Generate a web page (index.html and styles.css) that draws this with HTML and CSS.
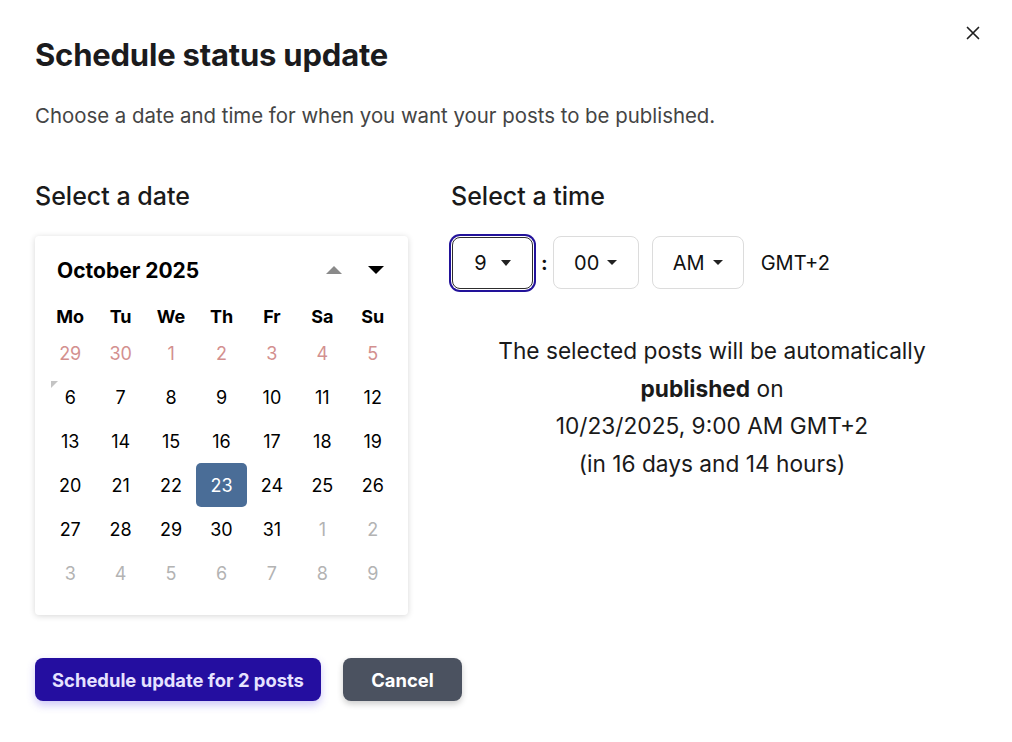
FILE: index.html
```html
<!DOCTYPE html>
<html lang="en">
<head>
<meta charset="utf-8">
<title>Schedule status update</title>
<link rel="stylesheet" href="styles.css">
</head>
<body>
<div class="dialog">
  <button class="close" aria-label="Close">
    <svg width="14" height="14" viewBox="0 0 14 14"><path d="M1.5 1.5 L12.5 12.5 M12.5 1.5 L1.5 12.5" stroke="#1f1f1f" stroke-width="1.7" stroke-linecap="round"/></svg>
  </button>
  <h1 class="title">Schedule status update</h1>
  <p class="subtitle">Choose a date and time for when you want your posts to be published.</p>

  <div class="columns">
    <section class="col-date">
      <h2 class="section-title">Select a date</h2>
      <div class="calendar">
        <div class="cal-header">
          <span class="month">October 2025</span>
          <div class="nav">
            <svg width="16" height="8" viewBox="0 0 16 8"><path d="M0 8 L8 0 L16 8 Z" fill="#8a8a8a"/></svg>
            <svg width="16" height="8" viewBox="0 0 16 8"><path d="M0 0 L16 0 L8 8 Z" fill="#000"/></svg>
          </div>
        </div>
        <div class="weekdays">
          <span>Mo</span><span>Tu</span><span>We</span><span>Th</span><span>Fr</span><span>Sa</span><span>Su</span>
        </div>
        <div class="days">
          <span class="prev">29</span><span class="prev">30</span><span class="prev">1</span><span class="prev">2</span><span class="prev">3</span><span class="prev">4</span><span class="prev">5</span>
          <span class="today">6</span><span>7</span><span>8</span><span>9</span><span>10</span><span>11</span><span>12</span>
          <span>13</span><span>14</span><span>15</span><span>16</span><span>17</span><span>18</span><span>19</span>
          <span>20</span><span>21</span><span>22</span><span class="selected">23</span><span>24</span><span>25</span><span>26</span>
          <span>27</span><span>28</span><span>29</span><span>30</span><span>31</span><span class="next">1</span><span class="next">2</span>
          <span class="next">3</span><span class="next">4</span><span class="next">5</span><span class="next">6</span><span class="next">7</span><span class="next">8</span><span class="next">9</span>
        </div>
      </div>
    </section>

    <section class="col-time">
      <h2 class="section-title">Select a time</h2>
      <div class="time-row">
        <div class="select select-hour focused">
          <span>9</span>
          <svg width="10" height="6" viewBox="0 0 10 6"><path d="M0 0 L10 0 L5 6 Z M4 0 L6 0 L5 1.4 Z" fill="#222"/></svg>
        </div>
        <span class="colon">:</span>
        <div class="select select-min">
          <span>00</span>
          <svg width="10" height="5" viewBox="0 0 10 5"><path d="M0 0 L10 0 L5 5 Z" fill="#222"/></svg>
        </div>
        <div class="select select-ampm">
          <span>AM</span>
          <svg width="10" height="5" viewBox="0 0 10 5"><path d="M0 0 L10 0 L5 5 Z" fill="#222"/></svg>
        </div>
        <span class="tz">GMT+2</span>
      </div>
      <p class="summary">The selected posts will be automatically<br><strong>published</strong> on<br>10/23/2025, 9:00 AM GMT+2<br>(in 16 days and 14 hours)</p>
    </section>
  </div>

  <div class="actions">
    <button class="btn btn-primary">Schedule update for 2 posts</button>
    <button class="btn btn-secondary">Cancel</button>
  </div>
</div>
</body>
</html>
```

FILE: styles.css
```css
* { box-sizing: border-box; }

body {
  margin: 0;
  background: #fff;
  font-family: Inter, "Noto Sans", "Liberation Sans", sans-serif;
  color: #1a1a1a;
}

.dialog {
  position: relative;
  width: 1012px;
  height: 742px;
  padding: 37px 35px 0 35px;
}

.close {
  position: absolute;
  top: 26px;
  right: 32px;
  width: 14px;
  height: 14px;
  padding: 0;
  border: 0;
  background: none;
  display: flex;
}

.title {
  margin: 0;
  font-size: 31px;
  line-height: 36px;
  font-weight: 700;
  color: #1b1b1d;
  letter-spacing: -0.2px;
}

.subtitle {
  margin: 29px 0 0 0;
  font-size: 20.4px;
  line-height: 28px;
  color: #444;
}

.columns {
  display: flex;
  margin-top: 50px;
}

.col-date { width: 416px; }
.col-time { width: 522px; }

.section-title {
  margin: 0;
  font-size: 25px;
  line-height: 32px;
  font-weight: 500;
  color: #1a1a1a;
}

.calendar {
  margin-top: 24px;
  width: 373px;
  padding: 10px 10px 20px 10px;
  border-radius: 4px;
  background: #fff;
  box-shadow: 0 1px 6px rgba(0, 0, 0, 0.16);
}

.cal-header {
  height: 48px;
  display: flex;
  align-items: center;
  justify-content: space-between;
  padding: 0 14px 0 12px;
}

.month {
  font-size: 21px;
  font-weight: 700;
  color: #000;
}

.nav {
  display: flex;
  align-items: center;
  gap: 26px;
}

.weekdays {
  margin-top: 7px;
  height: 30px;
  display: grid;
  grid-template-columns: repeat(7, 1fr);
  align-items: center;
  text-align: center;
  font-size: 18px;
  font-weight: 700;
  color: #000;
}

.days {
  display: grid;
  grid-template-columns: repeat(7, 1fr);
  grid-auto-rows: 44px;
}

.days span {
  position: relative;
  display: flex;
  align-items: center;
  justify-content: center;
  font-size: 18px;
  color: #000;
  border-radius: 5px;
}

.days .prev { color: #d3908f; }
.days .next { color: #b3b3b3; }

.days .selected {
  background: #4a6d97;
  color: #fff;
}

.days .today::before {
  content: "";
  position: absolute;
  left: 6px;
  top: 6px;
  width: 0;
  height: 0;
  border-top: 7px solid #c4c4c4;
  border-right: 7px solid transparent;
}

.time-row {
  margin-top: 24px;
  display: flex;
  align-items: center;
  height: 53px;
}

.select {
  height: 53px;
  display: flex;
  align-items: center;
  justify-content: center;
  gap: 8px;
  border: 1px solid #dcdcdc;
  border-radius: 8px;
  font-size: 20px;
  color: #111;
  background: #fff;
}

.select-hour {
  width: 81px;
  height: 52px;
  gap: 14px;
  margin-left: 1px;
}
.select-min { width: 86px; margin-left: 5px; }
.select-ampm { width: 92px; margin-left: 13px; }

.focused {
  border: 1px solid #2d2d2d;
  box-shadow: 0 0 0 1px #fff, 0 0 0 3px #22129a;
}

.colon {
  margin-left: 8px;
  font-size: 20px;
  font-weight: 700;
  color: #111;
}

.tz {
  margin-left: 17px;
  font-size: 20px;
  color: #111;
}

.summary {
  margin: 43px 0 0 0;
  text-align: center;
  font-size: 22.7px;
  line-height: 37.5px;
  color: #1a1a1a;
}

.summary strong { font-weight: 700; }

.actions {
  margin-top: 43px;
  display: flex;
  gap: 22px;
}

.btn {
  height: 43px;
  border: 0;
  border-radius: 8px;
  font-family: Inter, "Noto Sans", "Liberation Sans", sans-serif;
  font-size: 18.4px;
  font-weight: 700;
  padding: 0;
}

.btn-primary {
  width: 286px;
  background: #240ea0;
  color: #e6e2ff;
  box-shadow: 0 4px 8px rgba(90, 70, 230, 0.3);
}

.btn-secondary {
  width: 119px;
  background: #4b5260;
  color: #fff;
  box-shadow: 0 3px 6px rgba(0, 0, 0, 0.2);
}
```
